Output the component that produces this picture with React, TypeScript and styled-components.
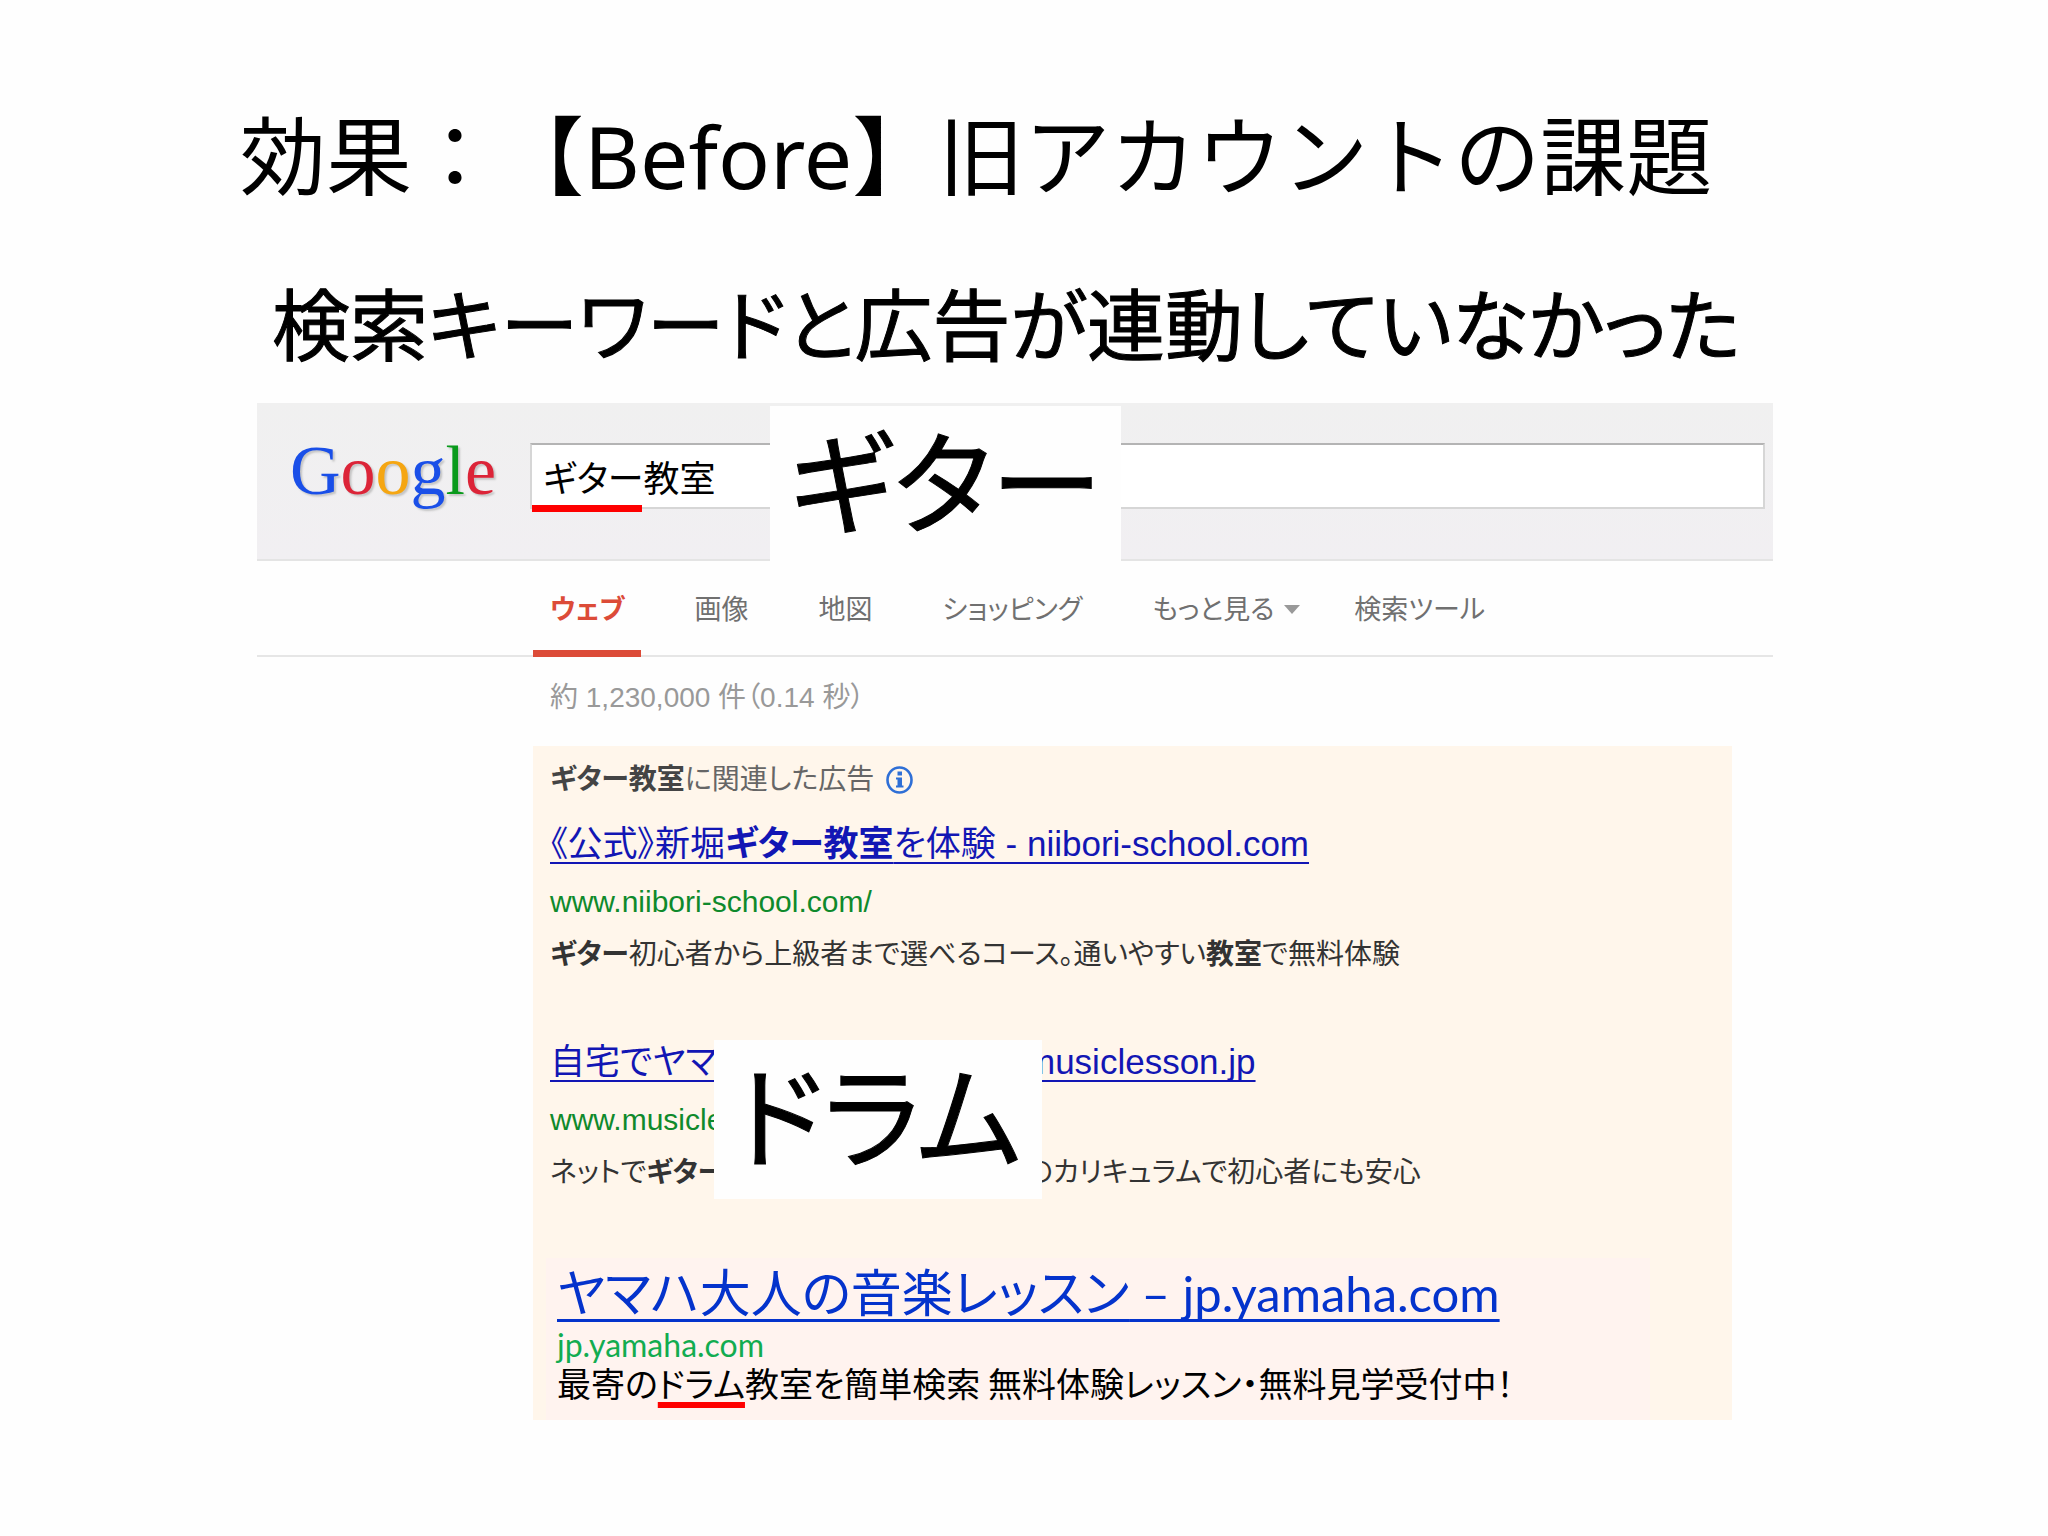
import React from "react";
import styled, { createGlobalStyle } from "styled-components";

const jp = '"Noto Sans CJK JP", sans-serif';
const arialJp = `"Liberation Sans", ${jp}`;

const GlobalStyle = createGlobalStyle`
  * { box-sizing: border-box; }
  body { margin: 0; background: #fefefe; color: #000; font-family: ${jp}; }
  h1, h2, h3, p { margin: 0; font-weight: 400; }
`;

const Slide = styled.main`
  padding: 106px 0 100px;
`;

const Title = styled.h1`
  padding-left: 240px;
  font: 400 86px/100px "Noto Sans", ${jp};
  text-spacing-trim: space-all;
  white-space: nowrap;
`;

const Subtitle = styled.h2`
  padding: 65px 0 32px 272px;
  font: 400 78px/100px ${jp};
  font-feature-settings: "palt";
  -webkit-text-stroke: 1px #000;
  white-space: nowrap;
`;

const Capture = styled.section`
  position: relative;
  width: 74%;
  margin-left: 257px;

  && * { font-feature-settings: "palt"; }
`;

const SearchHeader = styled.header`
  display: grid;
  grid-template-columns: 273px 1fr;
  height: 158px;
  padding: 40px 8px 0 0;
  background: linear-gradient(#f0f0f0, #f1eff2);
  border-bottom: 2px solid #e4e4e4;
`;

const Logo = styled.a`
  padding-left: 33px;
  font: 400 70px/56px "Liberation Serif", serif;
  text-decoration: none;
  text-shadow: 2px 2px 2px #c4c4c4;
`;

const Letter = styled.span<{ $tone: string }>`
  color: ${(p) => p.$tone};
`;

const SearchField = styled.label`
  position: relative;
  height: 66px;
`;

const SearchInput = styled.input`
  width: 100%;
  height: 66px;
  padding: 0 11px;
  border: 2px solid #d6d6d6;
  border-top-color: #b4b4b4;
  border-radius: 0;
  background: #fff;
  font: 400 36px/40px ${arialJp};
  color: #000;
  outline: none;
`;

const KeywordMark = styled.span`
  position: absolute;
  left: 2px;
  bottom: -3px;
  width: 110px;
  height: 7px;
  background: #fe0000;
`;

const Tabs = styled.nav`
  display: flex;
  gap: 36px;
  height: 96px;
  padding-left: 276px;
  border-bottom: 2px solid #e6e6e6;
`;

const Tab = styled.a<{ $active?: boolean }>`
  display: flex;
  align-items: center;
  gap: 10px;
  height: 96px;
  padding: 8px 17px 0;
  border-bottom: 7px solid ${(p) => (p.$active ? "#dc4b38" : "transparent")};
  color: ${(p) => (p.$active ? "#dc4b38" : "#707070")};
  font: ${(p) => (p.$active ? 700 : 400)} 27px/32px ${arialJp};
  text-decoration: none;
  white-space: nowrap;
`;

const Caret = styled.span`
  margin-right: -16px;
  border: 8px solid transparent;
  border-top: 9px solid #999;
  border-bottom: 0;
`;

const Stats = styled.p`
  padding: 25px 0 32px 293px;
  font: 400 28px/32px ${arialJp};
  color: #999;
`;

const Ads = styled.div`
  position: relative;
  margin: 0 41px 0 276px;
  padding: 18px 0 0 17px;
  background: #fff6eb;
`;

const AdsLabel = styled.p`
  display: flex;
  align-items: center;
  margin-bottom: 26px;
  font: 400 28px/32px ${arialJp};
  color: #666;
  white-space: nowrap;

  b { color: #444; }
  svg { margin-left: 12px; }
`;

const Ad = styled.article`
  margin-bottom: 69px;
  white-space: nowrap;
`;

const AdTitle = styled.h3`
  font: 400 35px/44px ${arialJp};

  a {
    color: #1216b4;
    text-decoration: underline;
    text-decoration-thickness: 2px;
    text-underline-offset: 6px;
    text-decoration-skip-ink: none;
  }
`;

const AdUrl = styled.p`
  margin: 20px 0 21px;
  font: 400 30px/32px ${arialJp};
  color: #0f8a2c;
`;

const AdText = styled.p`
  font: 400 28px/32px ${arialJp};
  color: #333;
`;

const SplitAd = styled(Ad)`
  display: grid;
  grid-template-columns: 164px 1fr;
  column-gap: 312px;
`;

const Feature = styled.article`
  margin: 0 82px 0 -4px;
  padding: 4px 0 18px 11px;
  background: #fff3ef;
  white-space: nowrap;
`;

const FeatureTitle = styled.h3`
  font: 400 51px/56px ${jp};

  a {
    color: #0433cc;
    text-decoration: underline;
    text-decoration-thickness: 3px;
    text-underline-offset: 7px;
    text-decoration-skip-ink: none;
  }
`;

const Domain = styled.span`
  font-family: Lato, sans-serif;
  font-size: 49px;
`;

const FeatureUrl = styled.p`
  margin-top: 5px;
  font: 400 32px/38px Lato, sans-serif;
  color: #12ac50;
`;

const FeatureText = styled.p`
  font: 400 34px/38px ${jp};
`;

const Marked = styled.span`
  text-decoration: underline;
  text-decoration-color: #fe0000;
  text-decoration-thickness: 6px;
  text-underline-offset: 5px;
  text-decoration-skip-ink: none;
`;

const Callout = styled.strong<{ $x: number; $y: number; $w: number; $h: number }>`
  position: absolute;
  left: ${(p) => p.$x}px;
  top: ${(p) => p.$y}px;
  width: ${(p) => p.$w}px;
  height: ${(p) => p.$h}px;
  display: flex;
  justify-content: center;
  background: #fefefe;
  color: #000;
  font: 400 112px/142px ${jp};
  white-space: nowrap;
  -webkit-text-stroke: 1px #000;
`;

const InfoIcon = () => (
  <svg width="27" height="28" viewBox="0 0 27 28" fill="none" aria-hidden="true">
    <ellipse cx="13.500" cy="14" rx="12" ry="12.500" stroke="#2f6fd6" strokeWidth="2.600" />
    <path d="M11.500 5.500h4.500v4h-4.500zM10 11.500h6v8h1.500v2h-7.500v-2h1.500v-6h-1.500z" fill="#2f6fd6" />
  </svg>
);

const logoLetters = [
  ["G", "#1a4fe8"],
  ["o", "#dc2438"],
  ["o", "#f5a612"],
  ["g", "#1a4fe8"],
  ["l", "#0a9a1c"],
  ["e", "#dc2438"],
];

export default function App() {
  return (
    <>
      <GlobalStyle />
      <Slide lang="ja">
        <Title>効果：【Before】旧アカウントの課題</Title>
        <Subtitle>検索キーワードと広告が連動していなかった</Subtitle>

        <Capture>
          <SearchHeader>
            <Logo href="#">
              {logoLetters.map(([letter, tone], i) => (
                <Letter key={i} $tone={tone}>{letter}</Letter>
              ))}
            </Logo>
            <SearchField>
              <SearchInput type="text" aria-label="検索" defaultValue="ギター教室" />
              <KeywordMark />
            </SearchField>
          </SearchHeader>
          <Callout $x={513} $y={3} $w={351} $h={155}>ギター</Callout>

          <Tabs>
            <Tab href="#" $active>ウェブ</Tab>
            <Tab href="#">画像</Tab>
            <Tab href="#">地図</Tab>
            <Tab href="#">ショッピング</Tab>
            <Tab href="#">もっと見る<Caret /></Tab>
            <Tab href="#">検索ツール</Tab>
          </Tabs>

          <Stats>約 1,230,000 件（0.14 秒）</Stats>

          <Ads>
            <AdsLabel>
              <b>ギター教室</b>に関連した広告<InfoIcon />
            </AdsLabel>
            <Ad>
              <AdTitle><a href="#">《公式》新堀<b>ギター教室</b>を体験 - niibori-school.com</a></AdTitle>
              <AdUrl>www.niibori-school.com/</AdUrl>
              <AdText><b>ギター</b>初心者から上級者まで選べるコース。通いやすい<b>教室</b>で無料体験</AdText>
            </Ad>
            <SplitAd>
              <div>
                <AdTitle><a href="#">自宅でヤマ</a></AdTitle>
                <AdUrl>www.musicle</AdUrl>
                <AdText>ネットで<b>ギター</b></AdText>
              </div>
              <div>
                <AdTitle><a href="#">musiclesson.jp</a></AdTitle>
                <AdUrl>&nbsp;</AdUrl>
                <AdText>のカリキュラムで初心者にも安心</AdText>
              </div>
            </SplitAd>
            <Callout $x={181} $y={294} $w={328} $h={159}>ドラム</Callout>
            <Feature>
              <FeatureTitle>
                <a href="#">ヤマハ大人の音楽レッスン<Domain> – jp.yamaha.com</Domain></a>
              </FeatureTitle>
              <FeatureUrl>jp.yamaha.com</FeatureUrl>
              <FeatureText>最寄の<Marked>ドラム</Marked>教室を簡単検索 無料体験レッスン・無料見学受付中！</FeatureText>
            </Feature>
          </Ads>
        </Capture>
      </Slide>
    </>
  );
}
